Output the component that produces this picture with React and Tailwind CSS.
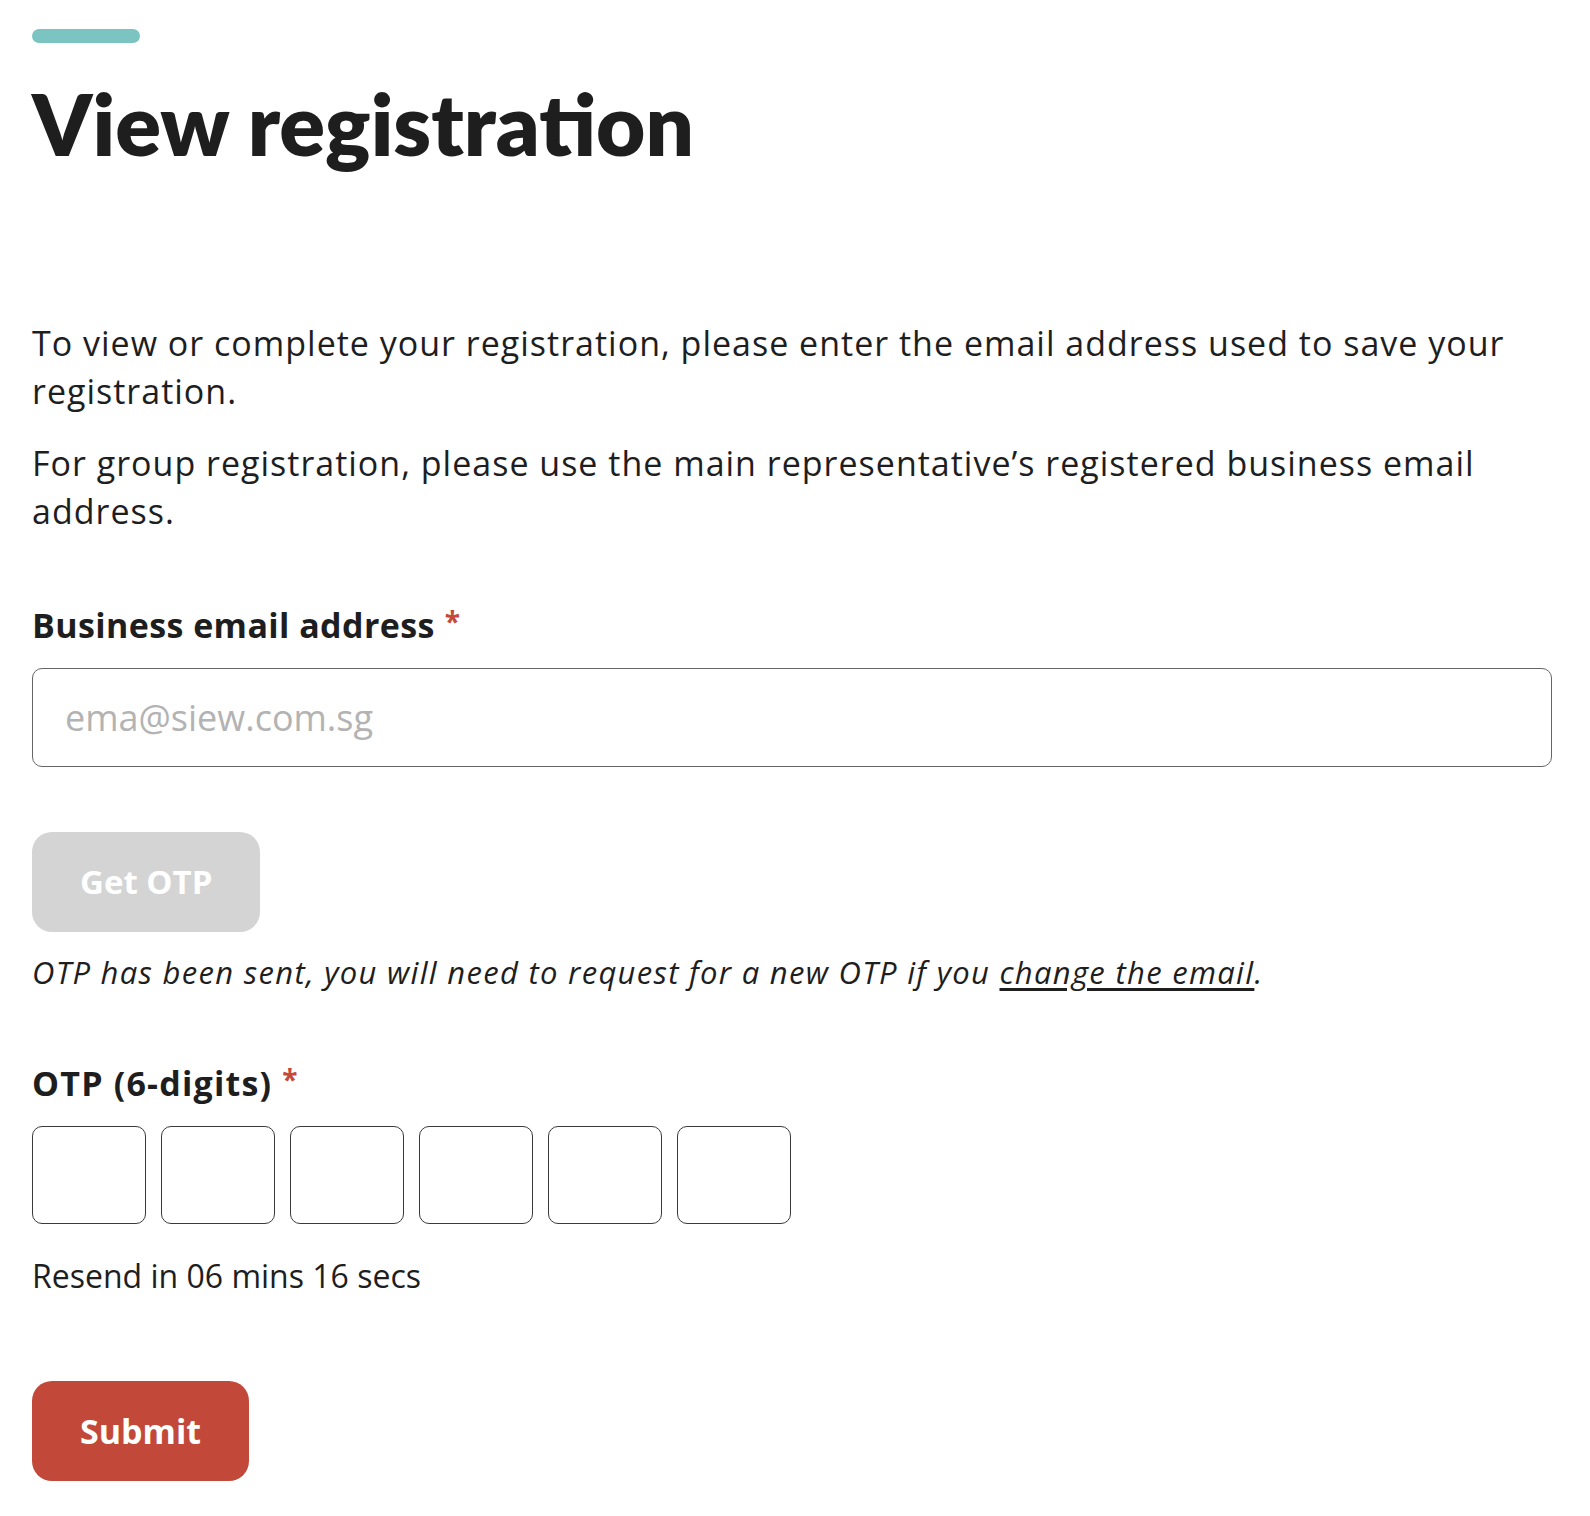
import { useState } from 'react'

const OtpBoxes = ({ count = 6 }) => {
  const [digits, setDigits] = useState(Array(count).fill(''))

  return (
    <div className="mt-[17px] flex gap-[15px]">
      {digits.map((d, i) => (
        <input
          key={i}
          value={d}
          maxLength={1}
          inputMode="numeric"
          onChange={(e) => {
            const next = [...digits]
            next[i] = e.target.value.replace(/\D/g, '')
            setDigits(next)
          }}
          className="h-[98px] w-[114px] rounded-[10px] border border-[#3a3a3a] bg-white text-center text-[36px] text-[#1e1e1e] outline-none"
        />
      ))}
    </div>
  )
}

const Required = () => (
  <span className="relative -top-[6px] ml-[10px] text-[28px] font-bold text-[#c4493a]">*</span>
)

export default function App() {
  const [email, setEmail] = useState('')

  return (
    <div className="min-h-screen bg-white pl-8 pr-[38px] pt-[29px] pb-10 font-['Open_Sans',sans-serif] text-[#1e1e1e]">
      {/* accent bar */}
      <div className="h-[14px] w-[108px] rounded-full bg-[#7bc4c1]" />

      <h1 className="mt-[38px] font-['Lato',sans-serif] text-[85px] font-extrabold leading-[84px]">
        View registration
      </h1>

      {/* Intro */}
      <div className="mt-[154px] space-y-6 text-[34px] leading-[48px] tracking-[1px]">
        <p>To view or complete your registration, please enter the email address used to save your registration.</p>
        <p>For group registration, please use the main representative’s registered business email address.</p>
      </div>

      {/* Email */}
      <label className="mt-[66px] block text-[34px] font-bold leading-[48px] tracking-[0.4px]">
        Business email address
        <Required />
      </label>
      <input
        type="email"
        value={email}
        onChange={(e) => setEmail(e.target.value)}
        placeholder="ema@siew.com.sg"
        className="mt-[17px] block h-[99px] w-full rounded-[10px] border-[1.5px] border-[#666666] px-8 text-[36px] text-[#1e1e1e] outline-none placeholder:text-[#b3b3b3]"
      />

      <button
        disabled
        className="mt-[65px] block h-[100px] rounded-[20px] bg-[#d4d4d4] px-12 text-[33px] font-bold text-white"
      >
        Get OTP
      </button>
      <p className="mt-4 text-[31px] italic leading-[48px] tracking-[1.3px]">
        OTP has been sent, you will need to request for a new OTP if you{' '}
        <a href="#" className="underline underline-offset-4">change the email</a>.
      </p>

      {/* OTP */}
      <label className="mt-[63px] block text-[34px] font-bold leading-[48px] tracking-[1.2px]">
        OTP (6-digits)
        <Required />
      </label>
      <OtpBoxes />
      <p className="mt-[28px] text-[32px] leading-[48px]">Resend in 06 mins 16 secs</p>

      <button className="mt-[81px] block h-[100px] rounded-[20px] bg-[#c2493a] px-12 text-[34px] font-bold text-white">
        Submit
      </button>
    </div>
  )
}
